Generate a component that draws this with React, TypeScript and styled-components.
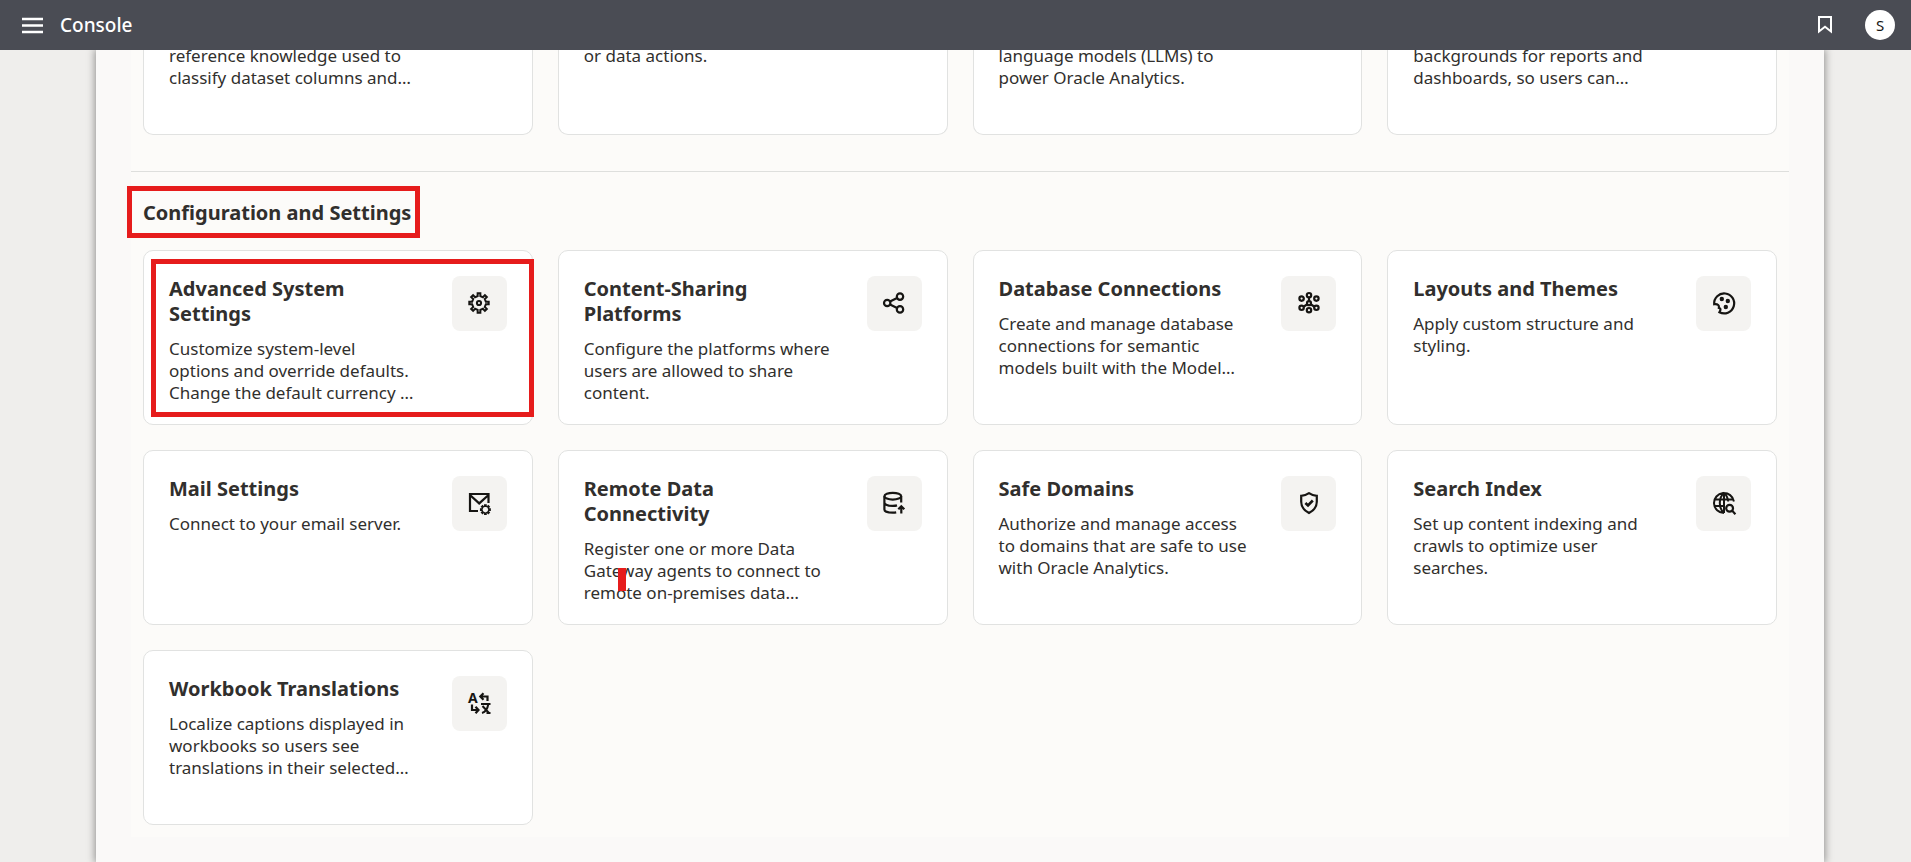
import React from "react";
import styled, { createGlobalStyle, css } from "styled-components";

const GlobalStyle = createGlobalStyle`
  *, *::before, *::after { box-sizing: border-box; }
  body {
    margin: 0;
    background: #efeeec;
    color: #312f2d;
    font-family: "Noto Sans", "Open Sans", sans-serif;
    font-size: 17px;
    line-height: 22px;
  }
`;

const Page = styled.div`
  display: flex;
  flex-direction: column;
  height: 100vh;
  overflow: hidden;
`;

const Header = styled.header`
  position: relative;
  z-index: 2;
  flex: none;
  display: flex;
  align-items: center;
  height: 50px;
  padding: 0 16px 0 20px;
  background: #4a4c54;
  color: #fff;
`;

const IconButton = styled.button`
  display: flex;
  padding: 0;
  border: 0;
  background: none;
  color: inherit;
  cursor: pointer;
`;

const AppTitle = styled.h1`
  flex: 1;
  margin: 0 0 0 15px;
  font-size: 19px;
  line-height: 24px;
  font-weight: 500;
`;

const Avatar = styled.button`
  width: 30px;
  height: 30px;
  margin-left: 30px;
  padding: 0;
  border: 0;
  border-radius: 50%;
  background: #fff;
  color: #161513;
  font: 15px/30px "Noto Sans", sans-serif;
  cursor: pointer;
`;

const Main = styled.main`
  flex: 1;
  display: flex;
  min-height: 0;
  padding: 0 87px 0 96px;
`;

const Panel = styled.div`
  flex: 1;
  padding: 0 35px;
  background: #faf9f8;
  box-shadow: 0 0 8px 1px rgba(0, 0, 0, 0.4);
`;

const Content = styled.div`
  background: #fcfbf9;
`;

const Group = styled.section<{ $divided?: boolean }>`
  padding: 0 12px 12px;
  ${(p) =>
    p.$divided &&
    css`
      margin-top: 24px;
      padding-top: 27px;
      border-top: 1px solid #dedfdd;
    `}
`;

const GroupTitle = styled.h2`
  position: relative;
  width: fit-content;
  margin: 0 0 23px;
  font-size: 20px;
  line-height: 28px;
  font-weight: 700;
`;

const Grid = styled.div`
  display: grid;
  grid-template-columns: repeat(4, minmax(0, 1fr));
  gap: 25px;
`;

const Card = styled.a<{ $scrolled?: boolean }>`
  position: relative;
  display: flex;
  align-items: flex-start;
  gap: 24px;
  min-height: 175px;
  padding: 25px 25px 20px;
  border: 1px solid #e1e2e1;
  border-radius: 10px;
  background: #fff;
  color: inherit;
  text-decoration: none;
  ${(p) =>
    p.$scrolled &&
    css`
      min-height: 85px;
      padding-top: 0;
      border-top: 0;
      border-radius: 0 0 10px 10px;
    `}
`;

const CardText = styled.div`
  flex: 1;
  min-width: 0;
`;

const CardTitle = styled.h3`
  margin: 0 0 12px;
  font-size: 20px;
  line-height: 25px;
  font-weight: 700;
  white-space: pre-line;
`;

const Description = styled.p<{ $scrolled?: boolean }>`
  margin: ${(p) => (p.$scrolled ? "-5px 0 0" : "0")};
  white-space: pre-line;
`;

const IconTile = styled.span`
  flex: none;
  display: flex;
  align-items: center;
  justify-content: center;
  width: 55px;
  height: 55px;
  border-radius: 8px;
  background: #f4f3f1;
  color: #161513;
`;

const TitleHighlight = styled.span`
  position: absolute;
  inset: -13px -9px -11px -16px;
  border: 5px solid #e61c1c;
`;

const CardHighlight = styled.span`
  position: absolute;
  inset: 8px -2px 7px 7px;
  border: 5px solid #e61c1c;
`;

const RedMark = styled.span`
  position: absolute;
  left: 59px;
  top: 117px;
  width: 8px;
  height: 23px;
  background: #e61c1c;
`;

const gearPath = (cx: number, cy: number, outer: number, inner: number) => {
  const points: string[] = [];
  for (let i = 0; i < 8; i++) {
    [
      [inner, -11],
      [outer, -8],
      [outer, 8],
      [inner, 11],
    ].forEach(([r, d]) => {
      const a = ((i * 45 + d) * Math.PI) / 180;
      points.push(`${(cx + r * Math.sin(a)).toFixed(2)} ${(cy - r * Math.cos(a)).toFixed(2)}`);
    });
  }
  return `M${points.join("L")}Z`;
};

const GlyphSvg = styled.svg`
  overflow: visible;
`;

const Glyph = ({ children }: { children: React.ReactNode }) => (
  <GlyphSvg width="24" height="24" viewBox="-1 1 24 24" fill="none" stroke="currentColor" strokeWidth="2.2" aria-hidden="true">
    {children}
  </GlyphSvg>
);

const icons: Record<string, React.ReactNode> = {
  gear: (
    <>
      <path d={gearPath(11, 12, 9.8, 7)} strokeWidth="2" />
      <circle cx="11" cy="12" r="2.1" strokeWidth="2" />
    </>
  ),
  share: (
    <>
      <circle cx="4.2" cy="12" r="3.2" />
      <circle cx="17" cy="5.6" r="3.2" />
      <circle cx="17" cy="18.4" r="3.2" />
      <path d="M7 10.6l7.1-3.6M7 13.4l7.1 3.6" />
    </>
  ),
  network: (
    <>
      <circle cx="11" cy="4.2" r="2.2" />
      <circle cx="3.6" cy="7.6" r="2.2" />
      <circle cx="18.4" cy="7.6" r="2.2" />
      <circle cx="3.6" cy="16.8" r="2.2" />
      <circle cx="18.4" cy="16.8" r="2.2" />
      <circle cx="11" cy="19.2" r="2.2" />
      <circle cx="11" cy="12.2" r="2" />
      <path d="M11 6.4v3.8M9.3 13.3l-3.8 2.4M12.7 13.3l3.8 2.4" />
    </>
  ),
  palette: (
    <>
      <path d="M1.2 13.2A10 10 0 1 1 6.4 21.2C8 18.5 7.8 17 5.9 16.8 6.3 14.4 5.2 12.8 1.2 13.2Z" />
      <g fill="currentColor" stroke="none">
        <circle cx="8.8" cy="8" r="2.2" />
        <circle cx="14.8" cy="10" r="2.2" />
        <circle cx="12.8" cy="16" r="2.2" />
      </g>
    </>
  ),
  mail: (
    <>
      <path d="M10 20H2V3h18.5v9M2 4l9.2 8.400L20.5 4" />
      <path d={gearPath(17.4, 18.6, 4.8, 3.4)} strokeWidth="1.4" />
    </>
  ),
  database: (
    <>
      <ellipse cx="9.8" cy="5.2" rx="8.4" ry="3.4" />
      <path d="M1.4 5.2V18.4c0 1.9 3.6 3.3 8.4 3.3 1.2 0 2.4-.1 3.4-.3M18.2 5.2v6.2M1.4 11.6c0 1.9 3.6 3.3 8.4 3.3 1.6 0 3-.1 4.2-.5" />
      <path d="M18.3 22.5v-6.8M15.3 18.3l3-3 3 3" />
    </>
  ),
  shield: (
    <>
      <path d="M11 2.2c2.4 1.6 5 2.4 7.8 2.6v6c0 5-2.6 8.6-7.8 11.2C5.8 19.4 3.2 15.8 3.2 10.8v-6C6 4.6 8.6 3.8 11 2.2Z" />
      <path d="M7.4 12l2.6 2.5 4.8-5" strokeWidth="2.6" />
    </>
  ),
  globe: (
    <>
      <path d="M11 22A10 10 0 1 1 20.9 10.5M11 22c-2.8-2.4-4.2-6-4.2-10S8.2 4.4 11 2c2.4 2 3.9 5 4.2 8.5M11 2v20M2 8.5h18M1.5 15h9.5" strokeWidth="2" />
      <circle cx="16.6" cy="17.2" r="3.4" />
      <path d="M19 19.6l3.4 3.6" />
    </>
  ),
  translate: (
    <>
      <text x="0" y="12" fill="currentColor" stroke="none" fontFamily="Noto Sans, sans-serif" fontSize="14" fontWeight="700">A</text>
      <path d="M19.5 10V5.5H12.5M15.5 2.2l-3.2 3.3 3.2 3.3M4 13.5v5.5h5.5M7.5 15.7l3 3.3-3 3.3" />
      <path d="M13 13h9.5M14.5 15l6.5 7M20.2 13.5c-.7 4.5-2.7 7.5-6.2 8.5M18.5 22h4" strokeWidth="2" />
    </>
  ),
};

interface Item {
  title: string;
  text: string;
  icon: string;
  overlay?: React.ReactNode;
}

const resourceTexts = [
  "reference knowledge used to\nclassify dataset columns and…",
  "or data actions.",
  "language models (LLMs) to\npower Oracle Analytics.",
  "backgrounds for reports and\ndashboards, so users can…",
];

const settings: Item[] = [
  { title: "Advanced System\nSettings", text: "Customize system-level\noptions and override defaults.\nChange the default currency …", icon: "gear", overlay: <CardHighlight /> },
  { title: "Content-Sharing\nPlatforms", text: "Configure the platforms where\nusers are allowed to share\ncontent.", icon: "share" },
  { title: "Database Connections", text: "Create and manage database\nconnections for semantic\nmodels built with the Model…", icon: "network" },
  { title: "Layouts and Themes", text: "Apply custom structure and\nstyling.", icon: "palette" },
  { title: "Mail Settings", text: "Connect to your email server.", icon: "mail" },
  { title: "Remote Data\nConnectivity", text: "Register one or more Data\nGateway agents to connect to\nremote on-premises data…", icon: "database", overlay: <RedMark /> },
  { title: "Safe Domains", text: "Authorize and manage access\nto domains that are safe to use\nwith Oracle Analytics.", icon: "shield" },
  { title: "Search Index", text: "Set up content indexing and\ncrawls to optimize user\nsearches.", icon: "globe" },
  { title: "Workbook Translations", text: "Localize captions displayed in\nworkbooks so users see\ntranslations in their selected…", icon: "translate" },
];

export default function App() {
  return (
    <Page>
      <GlobalStyle />
      <Header>
        <IconButton aria-label="Navigation menu">
          <svg width="25" height="24" viewBox="0 0 25 24" fill="none" stroke="currentColor" strokeWidth="2.4">
            <path d="M2 6h21M2 12.5h21M2 19h21" />
          </svg>
        </IconButton>
        <AppTitle>Console</AppTitle>
        <IconButton aria-label="Bookmarks">
          <svg width="20" height="24" viewBox="0 0 20 24" fill="none" stroke="currentColor" strokeWidth="2">
            <path d="M4 4h12v14.5l-6-4.7-6 4.7Z" />
          </svg>
        </IconButton>
        <Avatar aria-label="Account S">S</Avatar>
      </Header>
      <Main>
        <Panel>
          <Content>
            <Group>
              <Grid>
                {resourceTexts.map((text) => (
                  <Card key={text} href="#" $scrolled>
                    <Description $scrolled>{text}</Description>
                  </Card>
                ))}
              </Grid>
            </Group>
            <Group $divided>
              <GroupTitle>
                Configuration and Settings
                <TitleHighlight />
              </GroupTitle>
              <Grid>
                {settings.map((item) => (
                  <Card key={item.title} href="#">
                    <CardText>
                      <CardTitle>{item.title}</CardTitle>
                      <Description>{item.text}</Description>
                    </CardText>
                    <IconTile>
                      <Glyph>{icons[item.icon]}</Glyph>
                    </IconTile>
                    {item.overlay}
                  </Card>
                ))}
              </Grid>
            </Group>
          </Content>
        </Panel>
      </Main>
    </Page>
  );
}
